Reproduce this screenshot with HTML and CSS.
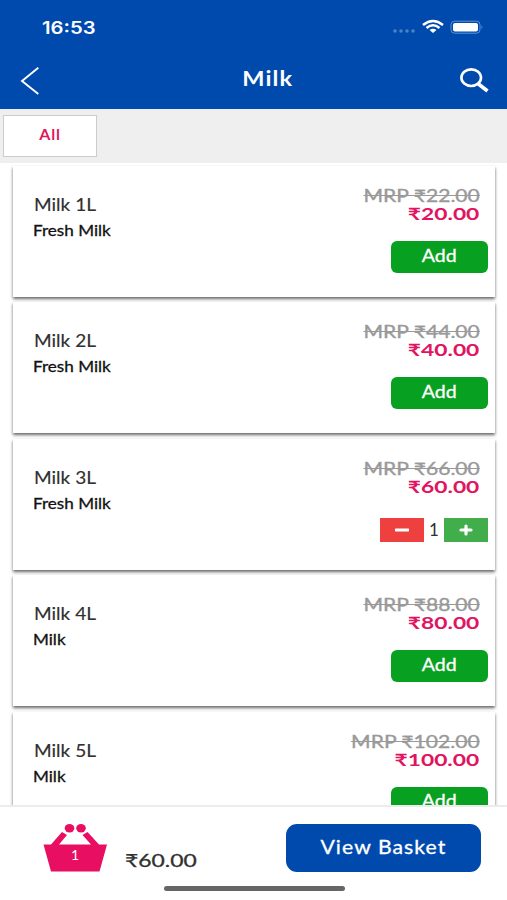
FILE: index.html
```
<!DOCTYPE html>
<html lang="en">
<head>
<meta charset="utf-8">
<title>Milk</title>
<link rel="stylesheet" href="styles.css">
</head>
<body>
<div class="app">
  <header class="header">
    <div class="status">
      <span class="clock">16:53</span>
      <svg class="indicators" width="92" height="18" viewBox="0 0 92 18">
        <g fill="#4c82c8"><circle cx="3" cy="13" r="1.8"/><circle cx="9" cy="13" r="1.8"/><circle cx="15" cy="13" r="1.8"/><circle cx="21" cy="13" r="1.8"/></g>
        <g fill="none" stroke="#fff" stroke-width="2.5"><path d="M31 7Q41 -1 51 7"/><path d="M34.5 10Q41 4.5 47.500 10"/></g>
        <path d="M37.500 12Q41 9.500 44.500 12L41 15Z" fill="#fff"/>
        <rect x="59" y="3.200" width="29" height="12" rx="3.500" fill="none" stroke="#5d91d5"/>
        <rect x="61" y="5" width="25" height="8.500" rx="2" fill="#fff"/>
        <path d="M89.500 7.500q2 1.700 0 3.500z" fill="#5d91d5"/>
      </svg>
    </div>
    <nav class="nav">
      <svg width="20" height="28" viewBox="0 0 20 28" fill="none" stroke="#fff" stroke-width="1.900"><path d="M18.300 0.800L2 14L18.300 27"/></svg>
      <h1 class="title">Milk</h1>
      <svg width="30" height="26" viewBox="0 0 30 26" fill="none" stroke="#fff"><ellipse cx="12.200" cy="9.700" rx="9.800" ry="8.300" stroke-width="2.600"/><path d="M18.800 15.500L28.500 23" stroke-width="3.600"/></svg>
    </nav>
  </header>
  <div class="filters"><button class="filter">All</button></div>
  <main class="list">
    <article class="card">
      <div class="info"><h2 class="name">Milk 1L</h2><p class="desc">Fresh Milk</p></div>
      <div class="buy"><s class="mrp">MRP ₹22.00</s><strong class="price">₹20.00</strong><button class="add"><span>Add</span></button></div>
    </article>
    <article class="card">
      <div class="info"><h2 class="name">Milk 2L</h2><p class="desc">Fresh Milk</p></div>
      <div class="buy"><s class="mrp">MRP ₹44.00</s><strong class="price">₹40.00</strong><button class="add"><span>Add</span></button></div>
    </article>
    <article class="card">
      <div class="info"><h2 class="name">Milk 3L</h2><p class="desc">Fresh Milk</p></div>
      <div class="buy"><s class="mrp">MRP ₹66.00</s><strong class="price">₹60.00</strong>
        <div class="stepper">
          <button class="step minus"><svg width="14" height="12" viewBox="0 0 14 12"><path d="M1 6H13" stroke="#fff" stroke-width="3" stroke-linecap="round"/></svg></button>
          <span class="count">1</span>
          <button class="step plus"><svg width="14" height="12" viewBox="0 0 14 12"><path d="M2 6H12M7 2V10" stroke="#fff" stroke-width="3.200" stroke-linecap="round"/></svg></button>
        </div>
      </div>
    </article>
    <article class="card">
      <div class="info"><h2 class="name">Milk 4L</h2><p class="desc">Milk</p></div>
      <div class="buy"><s class="mrp">MRP ₹88.00</s><strong class="price">₹80.00</strong><button class="add"><span>Add</span></button></div>
    </article>
    <article class="card">
      <div class="info"><h2 class="name">Milk 5L</h2><p class="desc">Milk</p></div>
      <div class="buy"><s class="mrp">MRP ₹102.00</s><strong class="price">₹100.00</strong><button class="add"><span>Add</span></button></div>
    </article>
  </main>
  <footer class="footer">
    <div class="checkout">
      <div class="basket">
        <svg width="64" height="48" viewBox="0 0 64 48" fill="#e80e61"><path d="M0.500 20.500H8L19 8L24 11L16 20.500H48L39.500 11L44.500 8L56 20.500H64L56.500 47.500H8Z"/><ellipse cx="26.500" cy="4.300" rx="4.800" ry="4.200"/><ellipse cx="38" cy="4.300" rx="4.800" ry="4.200"/></svg>
        <span class="badge">1</span>
      </div>
      <span class="total">₹60.00</span>
      <button class="view"><span>View Basket</span></button>
    </div>
    <div class="home"></div>
  </footer>
</div>
</body>
</html>
```

FILE: styles.css
```
* { box-sizing: border-box; margin: 0; padding: 0; }
body { font-family: Lato, "Liberation Sans", sans-serif; background: #fff; color: #303030; }
button { border: 0; font: inherit; color: #fff; }
svg { display: block; }
.app { width: 507px; height: 900px; display: flex; flex-direction: column; overflow: hidden; }
.header { height: 109px; background: #004aad; color: #fff; flex: none; }
.status { height: 54px; display: flex; justify-content: space-between; align-items: center; padding: 0 23px 0 42px; }
.clock { font: 600 17px/20px Inter, sans-serif; transform: translateY(.5px) scaleX(1.19); transform-origin: left; }
.nav { height: 50px; display: flex; justify-content: space-between; align-items: center; padding: 3px 18px 0 20px; }
.title { font-size: 21px; line-height: 26px; font-weight: 700; letter-spacing: 1px; transform: scaleX(1.12); margin: -5px 0 0 36px; }
.filters { height: 54px; flex: none; background: #efefef; padding: 6px 3px; }
.filter { width: 94px; height: 42px; background: #fff; border: 1px solid #ccc; color: #e0185f; font-size: 16px; line-height: 20px; font-weight: 700; letter-spacing: .8px; padding-bottom: 4px; }
.list { flex: 1; min-height: 0; overflow: hidden; padding: 3px 12px 0 13px; display: flex; flex-direction: column; gap: 5.400px; }
.card { height: 131px; flex: none; background: #fff; display: flex; justify-content: space-between; padding: 21px 7px 0 21px; box-shadow: 0 2px 3px rgba(0,0,0,.6); }
.name { font-size: 17px; line-height: 24px; font-weight: 400; margin-top: 6px; transform: scaleX(1.12); transform-origin: left; -webkit-text-stroke: .15px; }
.desc { font-size: 15px; line-height: 20px; color: #111; margin: 3px 0 0 -1px; transform: scaleX(1.14); transform-origin: left; -webkit-text-stroke: .3px; }
.buy { display: flex; flex-direction: column; align-items: flex-end; }
.mrp, .price { line-height: 18px; font-size: 17px; margin-right: 8px; transform: scaleX(1.24); transform-origin: right; }
.mrp { color: #999; -webkit-text-stroke: .35px; }
.price { color: #e2135f; font-weight: 700; margin-right: 9px; transform: scaleX(1.34); }
.add { width: 97px; height: 32px; border-radius: 6px; background: #08a021; margin-top: 18px; font-size: 17px; line-height: 24px; padding-bottom: 3px; }
.add span { display: inline-block; transform: scaleX(1.15); -webkit-text-stroke: .3px; }
.stepper { display: flex; width: 108px; height: 24px; margin-top: 22px; align-items: center; justify-content: space-between; }
.step { width: 44px; height: 24px; display: flex; align-items: center; justify-content: center; }
.minus { background: #ef4040; }
.plus { background: #42ae4b; }
.count { font-size: 17px; line-height: 20px; }
.footer { height: 95px; flex: none; border-top: 2px solid #ececec; background: #fff; }
.checkout { height: 79px; display: flex; align-items: center; padding: 2px 26px 0 43px; }
.basket { position: relative; width: 64px; }
.badge { position: absolute; left: 0; right: 0; top: 22px; text-align: center; color: #fff; font-size: 14px; line-height: 18px; }
.total { font-size: 18px; line-height: 24px; margin: 24px 0 0 18px; transform: scaleX(1.27); transform-origin: left; -webkit-text-stroke: .3px; }
.view { width: 195px; height: 48px; margin-left: auto; border-radius: 11px; background: #004aad; font-size: 20px; line-height: 26px; padding-bottom: 3px; }
.view span { display: inline-block; letter-spacing: 1px; transform: scaleX(1.06); -webkit-text-stroke: .3px; }
.home { width: 181px; height: 5px; border-radius: 3px; background: #666; margin-left: 164px; }
```
